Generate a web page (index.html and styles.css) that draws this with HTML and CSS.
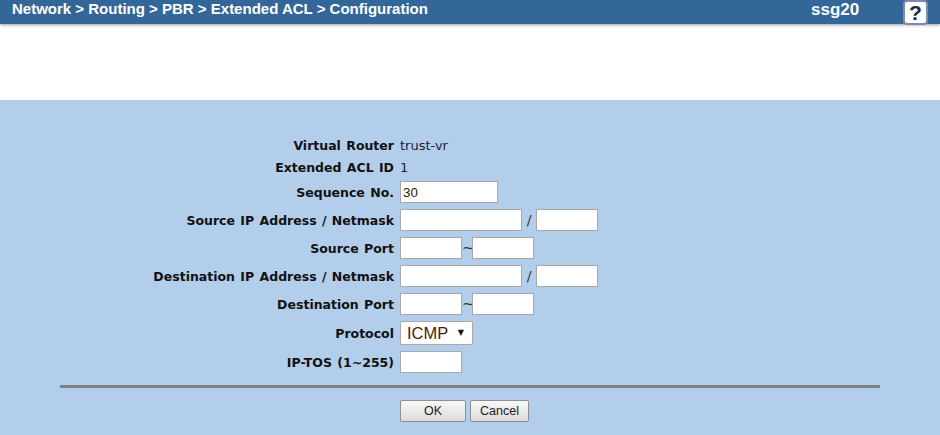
FILE: index.html
```html
<!DOCTYPE html>
<html lang="en">
<head>
    <meta charset="UTF-8">
    <meta name="viewport" content="width=device-width, initial-scale=1.0">
    <title>Extended ACL Configuration</title>
    <link rel="stylesheet" href="styles.css">
</head>
<body>
    <header>
        <div class="crumbs">Network &gt; Routing &gt; PBR &gt; Extended ACL &gt; Configuration</div>
        <div class="device">ssg20</div>
        <div class="help">?</div>
    </header>

    <div class="spacer"></div>

    <div class="panel">
        <div class="form">
            <div class="row row-text">
                <label>Virtual Router</label>
                <span class="value">trust-vr</span>
            </div>
            <div class="row row-text">
                <label>Extended ACL ID</label>
                <span class="value">1</span>
            </div>
            <div class="row row-seq">
                <label>Sequence No.</label>
                <input class="w-seq" type="text" value="30">
            </div>
            <div class="row">
                <label>Source IP Address / Netmask</label>
                <input class="w-ip" type="text">
                <span class="sep-slash">/</span>
                <input class="w-mask" type="text">
            </div>
            <div class="row">
                <label>Source Port</label>
                <input class="w-port" type="text">
                <span class="sep-tilde">~</span>
                <input class="w-port" type="text">
            </div>
            <div class="row">
                <label>Destination IP Address / Netmask</label>
                <input class="w-ip" type="text">
                <span class="sep-slash">/</span>
                <input class="w-mask" type="text">
            </div>
            <div class="row">
                <label>Destination Port</label>
                <input class="w-port" type="text">
                <span class="sep-tilde">~</span>
                <input class="w-port" type="text">
            </div>
            <div class="row row-select">
                <label>Protocol</label>
                <div class="select-box">
                    <select>
                        <option>ICMP</option>
                    </select>
                    <span class="arrow">▼</span>
                </div>
            </div>
            <div class="row">
                <label>IP-TOS (1~255)</label>
                <input class="w-port" type="text">
            </div>
        </div>

        <div class="rule"></div>

        <div class="actions">
            <button class="btn-ok">OK</button>
            <button class="btn-cancel">Cancel</button>
        </div>
    </div>
</body>
</html>
```

FILE: styles.css
```css
* {
    margin: 0;
    padding: 0;
    box-sizing: border-box;
}

body {
    height: 100vh;
    overflow: hidden;
    display: flex;
    flex-direction: column;
    background-color: white;
    font-family: "DejaVu Sans", sans-serif;
}

header {
    height: 24px;
    flex-shrink: 0;
    background-color: #336699;
    box-shadow: 0 1px 3px rgba(0, 0, 0, 0.4);
    color: white;
    display: flex;
    align-items: flex-start;
    font-family: "Liberation Sans", Arial, sans-serif;
    font-weight: bold;
}

.crumbs {
    flex: 1;
    padding-left: 12px;
    font-size: 15px;
    line-height: 18px;
}

.device {
    width: 92px;
    font-size: 17px;
    line-height: 20px;
}

.help {
    width: 25px;
    height: 25px;
    margin-right: 12px;
    background-color: white;
    border: 2px solid #8288ad;
    border-radius: 4px;
    color: #1c2a48;
    font-size: 21px;
    line-height: 21px;
    text-align: center;
}

.spacer {
    height: 76px;
    flex-shrink: 0;
}

.panel {
    flex: 1;
    background-color: #b3ceeb;
    padding: 34px 60px 0;
}

.form {
    display: flex;
    flex-direction: column;
    gap: 6px;
}

.row {
    display: flex;
    align-items: center;
    height: 22px;
}

.row-text {
    margin-bottom: -6px;
}

.row-seq {
    margin-top: 3px;
}

.row-select {
    height: 24px;
}

.row label {
    width: 334px;
    margin-right: 6px;
    flex-shrink: 0;
    text-align: right;
    font-size: 12.5px;
    word-spacing: 1px;
    font-weight: bold;
    color: #111;
    white-space: nowrap;
}

.value {
    font-size: 13px;
    color: #223;
}

input {
    height: 22px;
    background-color: white;
    border: 1px solid #a9a9a9;
    padding: 0 2px;
    font-family: "Liberation Sans", Arial, sans-serif;
    font-size: 13.33px;
    color: #302000;
}

.w-seq {
    width: 98px;
}

.w-ip {
    width: 122px;
}

.w-mask {
    width: 62px;
}

.w-port {
    width: 62px;
}

.sep-slash {
    width: 14px;
    text-align: center;
    font-size: 14px;
    color: #333;
}

.sep-tilde {
    width: 10px;
    text-align: center;
    font-size: 15px;
    color: #333;
}

.select-box {
    position: relative;
    width: 73px;
    height: 24px;
}

select {
    appearance: none;
    width: 100%;
    height: 100%;
    background-color: white;
    border: 1px solid #a9a9a9;
    border-radius: 2px;
    padding-left: 6px;
    font-family: "Liberation Sans", Arial, sans-serif;
    font-size: 16.5px;
    color: #4a1e00;
}

.arrow {
    position: absolute;
    top: 6px;
    right: 9px;
    font-size: 8px;
    line-height: 12px;
    color: #111;
    pointer-events: none;
}

.rule {
    height: 3px;
    margin-top: 12px;
    background-color: #808080;
}

.actions {
    display: flex;
    gap: 4px;
    padding-left: 340px;
    margin-top: 12px;
}

button {
    height: 22px;
    border: 1px solid #8f8f8f;
    border-radius: 2px;
    background: linear-gradient(#f8f8f8, #dcdcdc);
    font-family: "Liberation Sans", Arial, sans-serif;
    font-size: 12.5px;
    color: #222;
}

.btn-ok {
    width: 66px;
}

.btn-cancel {
    width: 59px;
}
```
